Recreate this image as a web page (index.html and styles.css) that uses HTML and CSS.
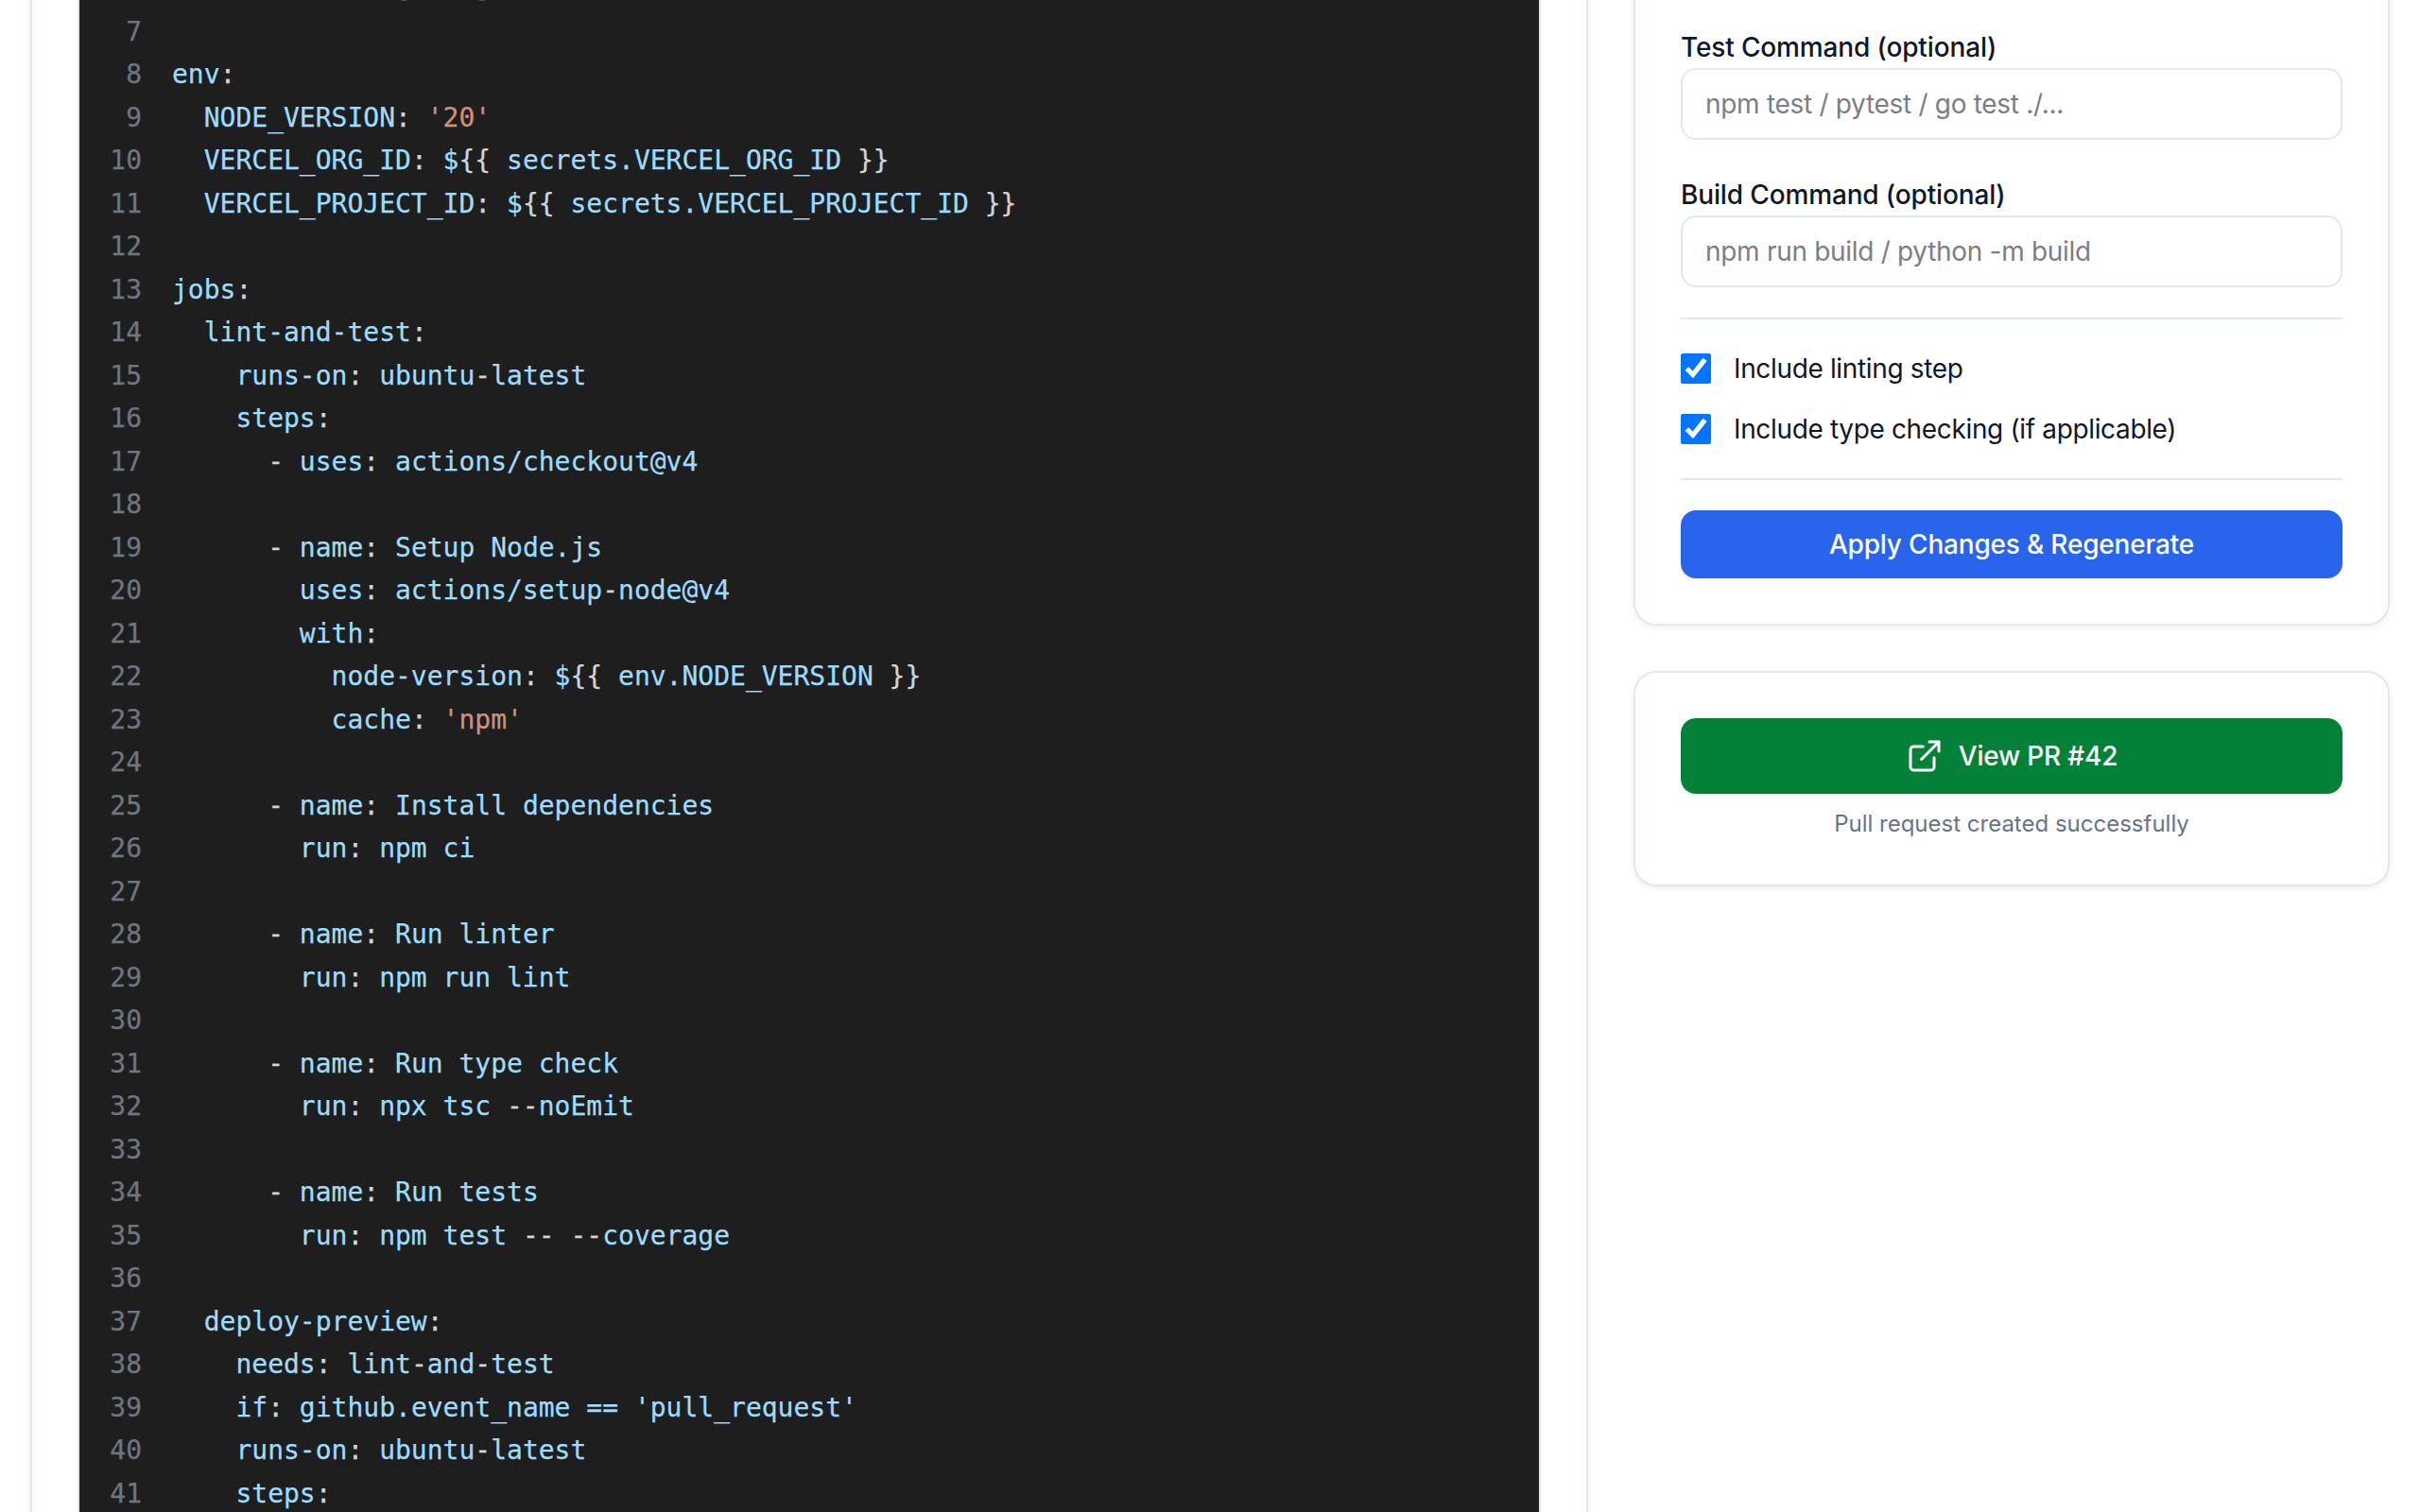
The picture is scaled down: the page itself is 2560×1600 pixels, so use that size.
FILE: index.html
```html
<!DOCTYPE html>
<html lang="en">
<head>
<meta charset="utf-8">
<title>Workflow editor</title>
<link rel="stylesheet" href="styles.css">
</head>
<body>
<main class="page">
  <section class="card preview">
    <div class="code">
      <div class="line"><span class="num">6</span><code>    branches<span class="p">: [</span>main<span class="p">]</span></code></div>
      <div class="line"><span class="num">7</span><code></code></div>
      <div class="line"><span class="num">8</span><code>env<span class="p">:</span></code></div>
      <div class="line"><span class="num">9</span><code>  NODE_VERSION<span class="p">:</span> <span class="s">'20'</span></code></div>
      <div class="line"><span class="num">10</span><code>  VERCEL_ORG_ID<span class="p">:</span> $<span class="p">{{</span> secrets.VERCEL_ORG_ID <span class="p">}}</span></code></div>
      <div class="line"><span class="num">11</span><code>  VERCEL_PROJECT_ID<span class="p">:</span> $<span class="p">{{</span> secrets.VERCEL_PROJECT_ID <span class="p">}}</span></code></div>
      <div class="line"><span class="num">12</span><code></code></div>
      <div class="line"><span class="num">13</span><code>jobs<span class="p">:</span></code></div>
      <div class="line"><span class="num">14</span><code>  lint-and-test<span class="p">:</span></code></div>
      <div class="line"><span class="num">15</span><code>    runs-on<span class="p">:</span> ubuntu<span class="p">-</span>latest</code></div>
      <div class="line"><span class="num">16</span><code>    steps<span class="p">:</span></code></div>
      <div class="line"><span class="num">17</span><code>      <span class="p">-</span> uses<span class="p">:</span> actions/checkout@v4</code></div>
      <div class="line"><span class="num">18</span><code></code></div>
      <div class="line"><span class="num">19</span><code>      <span class="p">-</span> name<span class="p">:</span> Setup Node.js</code></div>
      <div class="line"><span class="num">20</span><code>        uses<span class="p">:</span> actions/setup<span class="p">-</span>node@v4</code></div>
      <div class="line"><span class="num">21</span><code>        with<span class="p">:</span></code></div>
      <div class="line"><span class="num">22</span><code>          node-version<span class="p">:</span> $<span class="p">{{</span> env.NODE_VERSION <span class="p">}}</span></code></div>
      <div class="line"><span class="num">23</span><code>          cache<span class="p">:</span> <span class="s">'npm'</span></code></div>
      <div class="line"><span class="num">24</span><code></code></div>
      <div class="line"><span class="num">25</span><code>      <span class="p">-</span> name<span class="p">:</span> Install dependencies</code></div>
      <div class="line"><span class="num">26</span><code>        run<span class="p">:</span> npm ci</code></div>
      <div class="line"><span class="num">27</span><code></code></div>
      <div class="line"><span class="num">28</span><code>      <span class="p">-</span> name<span class="p">:</span> Run linter</code></div>
      <div class="line"><span class="num">29</span><code>        run<span class="p">:</span> npm run lint</code></div>
      <div class="line"><span class="num">30</span><code></code></div>
      <div class="line"><span class="num">31</span><code>      <span class="p">-</span> name<span class="p">:</span> Run type check</code></div>
      <div class="line"><span class="num">32</span><code>        run<span class="p">:</span> npx tsc <span class="p">--</span>noEmit</code></div>
      <div class="line"><span class="num">33</span><code></code></div>
      <div class="line"><span class="num">34</span><code>      <span class="p">-</span> name<span class="p">:</span> Run tests</code></div>
      <div class="line"><span class="num">35</span><code>        run<span class="p">:</span> npm test <span class="p">--</span> <span class="p">--</span>coverage</code></div>
      <div class="line"><span class="num">36</span><code></code></div>
      <div class="line"><span class="num">37</span><code>  deploy-preview<span class="p">:</span></code></div>
      <div class="line"><span class="num">38</span><code>    needs<span class="p">:</span> lint<span class="p">-</span>and<span class="p">-</span>test</code></div>
      <div class="line"><span class="num">39</span><code>    if<span class="p">:</span> github.event_name == 'pull_request'</code></div>
      <div class="line"><span class="num">40</span><code>    runs-on<span class="p">:</span> ubuntu<span class="p">-</span>latest</code></div>
      <div class="line"><span class="num">41</span><code>    steps<span class="p">:</span></code></div>
    </div>
  </section>

  <aside class="side">
    <form class="card settings">
      <div class="field">
        <label class="label" for="test-command">Test Command (optional)</label>
        <input class="input" id="test-command" type="text" placeholder="npm test / pytest / go test ./...">
      </div>
      <div class="field">
        <label class="label" for="build-command">Build Command (optional)</label>
        <input class="input" id="build-command" type="text" placeholder="npm run build / python -m build">
      </div>
      <div class="checks">
        <label class="check"><input type="checkbox" checked><span>Include linting step</span></label>
        <label class="check"><input type="checkbox" checked><span>Include type checking (if applicable)</span></label>
      </div>
      <button class="btn btn-blue" type="button">Apply Changes &amp; Regenerate</button>
    </form>

    <div class="card result">
      <a class="btn btn-green" href="#">
        <svg class="icon" viewBox="0 0 24 24" fill="none" stroke="currentColor" stroke-width="1.8" stroke-linecap="round" stroke-linejoin="round" aria-hidden="true">
          <path d="M18 13v6a2 2 0 0 1-2 2H5a2 2 0 0 1-2-2V8a2 2 0 0 1 2-2h6"/>
          <path d="M15 3h6v6"/>
          <path d="M10 14 21 3"/>
        </svg>
        <span>View PR #42</span>
      </a>
      <p class="note">Pull request created successfully</p>
    </div>
  </aside>
</main>
</body>
</html>
```
FILE: styles.css
```css
* { box-sizing: border-box; }

html, body {
  margin: 0;
  height: 1600px;
  overflow: hidden;
  background: #fff;
}

body {
  font-family: Inter, "Noto Sans", sans-serif;
  color: #0f172a;
}

.page {
  display: grid;
  grid-template-columns: 1648px 800px;
  column-gap: 48px;
  align-items: start;
  padding: 0 32px;
  height: 1600px;
}

.card {
  background: #fff;
  border: 2px solid #e2e8f0;
  border-radius: 24px;
  box-shadow: 0 2px 6px rgba(15, 23, 42, 0.07);
}

.preview {
  margin-top: -200px;
  height: 2000px;
  padding: 0 48px;
}

.code {
  background: #1e1e1e;
  border-left: 2px solid #e2e8f0;
  border-right: 2px solid #e2e8f0;
  height: 2000px;
  padding-top: 163px;
  font-family: "DejaVu Sans Mono", monospace;
  font-size: 28px;
  line-height: 45.5px;
  color: #9cdcfe;
  -webkit-text-stroke: 0.25px currentColor;
}

.line {
  display: flex;
  height: 45.5px;
  white-space: pre;
}

.num {
  flex: none;
  width: 66px;
  text-align: right;
  margin-right: 32px;
  color: #6e7681;
}

.line code {
  font: inherit;
}

.p { color: #d4d4d4; }
.s { color: #ce9178; }

.side {
  display: flex;
  flex-direction: column;
  gap: 48px;
}

.settings {
  margin-top: -200px;
  padding: 228px 48px 48px;
  display: flex;
  flex-direction: column;
}

.field {
  display: flex;
  flex-direction: column;
  margin-bottom: 38px;
}

.field:nth-child(2) { margin-bottom: 32px; }

.label {
  font-size: 28px;
  line-height: 40px;
  font-weight: 500;
  letter-spacing: -0.14px;
  margin-bottom: 2px;
}

.input {
  height: 76px;
  padding: 0 24px;
  border: 2px solid #e2e8f0;
  border-radius: 16px;
  font: 400 28px Inter, sans-serif;
  letter-spacing: -0.3px;
  color: #0f172a;
  background: #fff;
  outline: none;
}

.input::placeholder { color: #7d7d86; opacity: 1; }

.checks {
  display: flex;
  flex-direction: column;
  gap: 24px;
  padding: 32px 0;
  border-top: 2px solid #e2e8f0;
  border-bottom: 2px solid #e2e8f0;
  margin-bottom: 32px;
}

.check {
  display: flex;
  align-items: center;
  gap: 24px;
  font-size: 28px;
  line-height: 40px;
  letter-spacing: -0.35px;
}

.check input {
  width: 32px;
  height: 32px;
  margin: 0;
  accent-color: #0075ff;
}

.btn {
  display: flex;
  align-items: center;
  justify-content: center;
  gap: 16px;
  width: 100%;
  border: 0;
  border-radius: 16px;
  color: #fff;
  font: 500 28px Inter, sans-serif;
  letter-spacing: -0.19px;
  text-decoration: none;
  box-shadow: 0 2px 4px rgba(15, 23, 42, 0.06);
}

.btn-blue { height: 72px; background: #2864ec; }
.btn-green { height: 80px; background: #038138; }

.icon { width: 40px; height: 40px; flex: none; }

.result { padding: 48px; }

.note {
  margin: 16px 0 0;
  text-align: center;
  font-size: 24px;
  line-height: 32px;
  color: #64748b;
}
```
